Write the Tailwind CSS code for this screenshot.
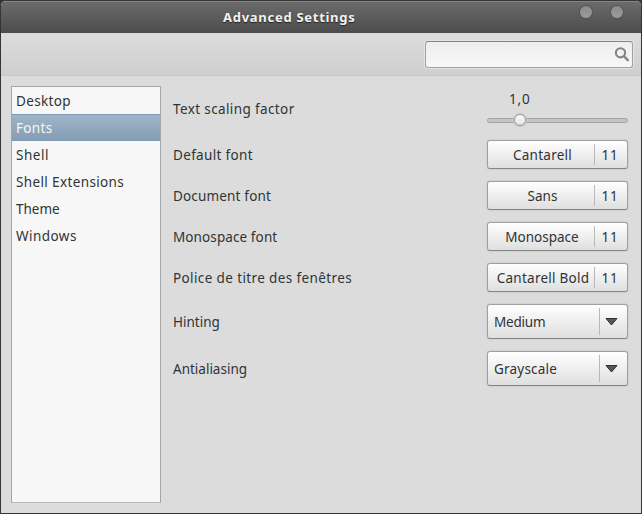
<!DOCTYPE html>
<html lang="fr">
<head>
<meta charset="utf-8">
<title>Advanced Settings</title>
<script src="https://cdn.jsdelivr.net/npm/@tailwindcss/browser@4"></script>
</head>
<body class="w-[642px] h-[514px] overflow-hidden bg-linear-to-r from-[#263746] to-[#1d3c60] font-['Noto_Sans',sans-serif] text-[13.5px] leading-[20px] text-[#2e3436]">
<div class="w-[642px] h-[514px] flex flex-col rounded-t-[6px] border border-[#353535] bg-[#dcdcdc] overflow-hidden">
  <header class="relative h-8 shrink-0 border-t border-[#858585] bg-linear-to-b from-[#6b6b6b] to-[#4c4c4c]">
    <h1 class="pl-[222px] pt-[5px] whitespace-nowrap text-[13px] leading-[20px] font-bold tracking-[0.72px] text-[#f3f3f3] [text-shadow:0_1px_1px_#222]">Advanced Settings</h1>
    <div class="absolute top-[4px] right-[18px] flex gap-[19px]">
      <span class="size-3 rounded-full bg-linear-to-b from-[#8b8b8b] to-[#9b9b9b] shadow-[0_0_1px_1px_#555]"></span>
      <span class="size-3 rounded-full bg-linear-to-b from-[#8b8b8b] to-[#9b9b9b] shadow-[0_0_1px_1px_#555]"></span>
    </div>
  </header>
  <div class="h-[43px] shrink-0 flex justify-end pt-2 pr-2 border-b border-[#c8c8c8] bg-linear-to-b from-[#dcdcdc] to-[#cfcfcf]">
    <div class="w-[208px] h-[27px] flex justify-end rounded-[3px] border border-[#a1a1a1] border-t-[#858585] bg-linear-to-b from-[#eeeeee] to-[#f7f7f7] shadow-[0_0_0_1px_#e4e4e4]">
      <svg class="w-4 h-4 mt-[5px] mr-[2px]" viewBox="0 0 16 16" fill="none" stroke="#858585"><circle cx="6.5" cy="5.8" r="4.6" stroke-width="2.1"/><path d="M9.8 9l4 4.2" stroke-width="2.4" stroke-linecap="round"/></svg>
    </div>
  </div>
  <main class="flex-1 flex pl-[10px] pt-[10px] pb-[10px]">
    <nav class="w-[150px] h-[417px] shrink-0 border border-[#a6a6a6] border-b-[#b9b9b9] bg-[#f7f7f7] whitespace-nowrap leading-[28px]">
      <div class="h-[27px] pl-1"><span class="tracking-[0.35px]">Desktop</span></div>
      <div class="h-[27px] pl-1 border-t border-[#7a9ab5] bg-linear-to-b from-[#a0b4c8] to-[#839db4] text-[#f4f6f8] leading-[26px]"><span class="tracking-[0.35px]">Fonts</span></div>
      <div class="h-[27px] pl-1"><span class="tracking-[0.55px]">Shell</span></div>
      <div class="h-[27px] pl-1"><span class="tracking-[0.37px]">Shell Extensions</span></div>
      <div class="h-[27px] pl-1"><span>Theme</span></div>
      <div class="h-[27px] pl-1"><span class="tracking-[0.45px]">Windows</span></div>
    </nav>
    <section class="w-[455px] ml-3 mt-1 flex flex-col gap-3 whitespace-nowrap">
      <div class="h-[38px] flex items-center justify-between">
        <span class="tracking-[0.38px]">Text scaling factor</span>
        <div class="w-[141px] h-full">
          <div class="pl-[22px] -mt-px tracking-[0.8px]">1,0</div>
          <svg class="mt-[3px]" width="141" height="16"><defs><linearGradient id="knob" x2="0" y2="1"><stop stop-color="#fff"/><stop offset="1" stop-color="#e2e2e2"/></linearGradient></defs><rect x=".5" y="6.5" width="140" height="4" rx="2" fill="#c5c5c5" stroke="#a2a2a2"/><circle cx="33" cy="8" r="7" fill="#c9c9c9"/><circle cx="33" cy="8" r="5.5" fill="url(#knob)" stroke="#999"/></svg>
        </div>
      </div>
      <div class="h-[29px] flex items-center justify-between">
        <span class="tracking-[0.33px]">Default font</span>
        <button class="w-[141px] h-[29px] flex items-center rounded-[3px] border border-[#a0a0a0] border-b-[#858585] bg-linear-to-b from-white to-[#dfdfdf] shadow-[0_0_1px_1px_#d1d1d1]"><span class="w-[106px] pl-[3px] text-center tracking-[0.25px]">Cantarell</span><span class="h-[21px] w-px bg-[#b8b8b8]"></span><span class="pl-[6.5px] tracking-[0.8px]">11</span></button>
      </div>
      <div class="h-[29px] flex items-center justify-between">
        <span class="tracking-[0.17px]">Document font</span>
        <button class="w-[141px] h-[29px] flex items-center rounded-[3px] border border-[#a0a0a0] border-b-[#858585] bg-linear-to-b from-white to-[#dfdfdf] shadow-[0_0_1px_1px_#d1d1d1]"><span class="w-[106px] pl-[3px] text-center">Sans</span><span class="h-[21px] w-px bg-[#b8b8b8]"></span><span class="pl-[6.5px] tracking-[0.8px]">11</span></button>
      </div>
      <div class="h-[29px] flex items-center justify-between">
        <span class="tracking-[0.1px]">Monospace font</span>
        <button class="w-[141px] h-[29px] flex items-center rounded-[3px] border border-[#a0a0a0] border-b-[#858585] bg-linear-to-b from-white to-[#dfdfdf] shadow-[0_0_1px_1px_#d1d1d1]"><span class="w-[106px] pl-[2px] text-center">Monospace</span><span class="h-[21px] w-px bg-[#b8b8b8]"></span><span class="pl-[6.5px] tracking-[0.8px]">11</span></button>
      </div>
      <div class="h-[29px] flex items-center justify-between">
        <span class="tracking-[0.38px]">Police de titre des fenêtres</span>
        <button class="w-[141px] h-[29px] flex items-center rounded-[3px] border border-[#a0a0a0] border-b-[#858585] bg-linear-to-b from-white to-[#dfdfdf] shadow-[0_0_1px_1px_#d1d1d1]"><span class="w-[106px] pl-[4px] text-center tracking-[0.25px]">Cantarell Bold</span><span class="h-[21px] w-px bg-[#b8b8b8]"></span><span class="pl-[6.5px] tracking-[0.8px]">11</span></button>
      </div>
      <div class="h-[35px] flex items-center justify-between">
        <span>Hinting</span>
        <button class="w-[141px] h-[35px] flex items-center rounded-[3px] border border-[#a0a0a0] border-b-[#858585] bg-linear-to-b from-white to-[#dfdfdf] shadow-[0_0_1px_1px_#d1d1d1] text-left"><span class="w-[111px] pl-[6px] tracking-[-0.2px]">Medium</span><span class="h-[27px] w-px bg-[#b8b8b8]"></span><svg class="ml-[4px]" width="14" height="10"><path d="M2 1.5h11L7.5 8z" fill="#555759" stroke="#2e3436"/></svg></button>
      </div>
      <div class="h-[35px] flex items-center justify-between">
        <span>Antialiasing</span>
        <button class="w-[141px] h-[35px] flex items-center rounded-[3px] border border-[#a0a0a0] border-b-[#858585] bg-linear-to-b from-white to-[#dfdfdf] shadow-[0_0_1px_1px_#d1d1d1] text-left"><span class="w-[111px] pl-[6px] tracking-[0.2px]">Grayscale</span><span class="h-[27px] w-px bg-[#b8b8b8]"></span><svg class="ml-[4px]" width="14" height="10"><path d="M2 1.5h11L7.5 8z" fill="#555759" stroke="#2e3436"/></svg></button>
      </div>
    </section>
  </main>
</div>
</body>
</html>
